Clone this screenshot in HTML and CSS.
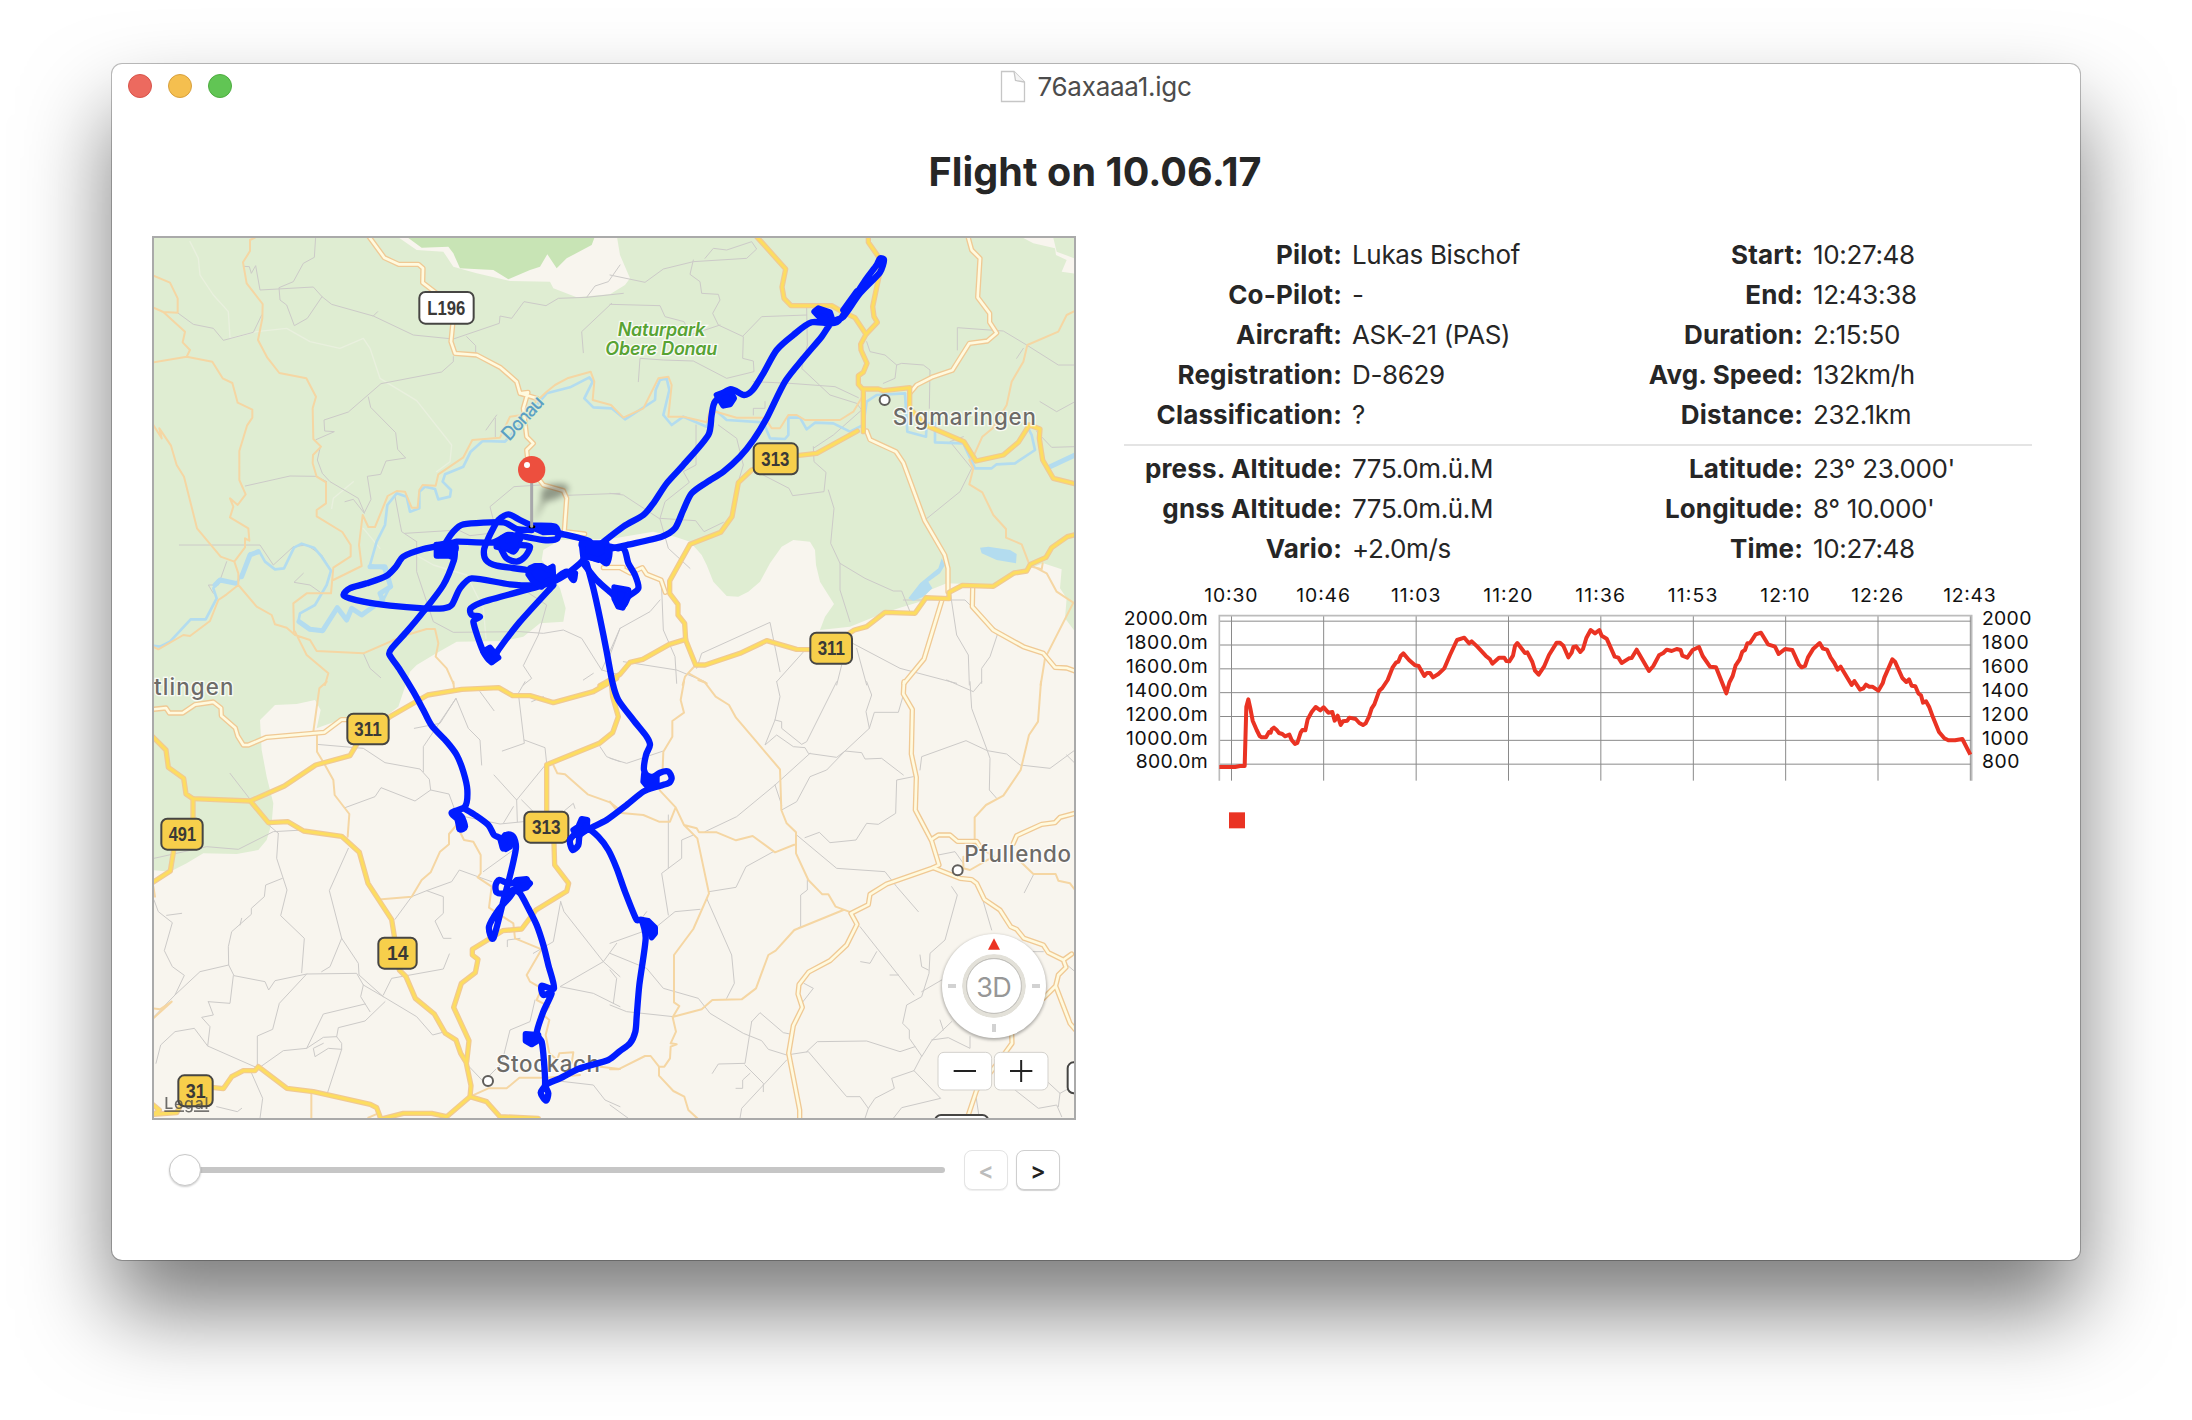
FILE: index.html
```html
<!DOCTYPE html>
<html lang="en">
<head>
<meta charset="utf-8">
<title>76axaaa1.igc</title>
<link rel="stylesheet" href="styles.css">
</head>
<body>
<main class="window">
  <header class="titlebar">
    <div class="lights"><span class="light close"></span><span class="light minimize"></span><span class="light zoom"></span></div>
    <div class="filename">
      <svg class="doc" width="26" height="34" viewBox="0 0 26 34"><path d="M1.5 1.5H14L24.500 12V31.500H1.500Z"/><path class="fold" d="M14 1.500L15.500 10.500L24.500 12"/></svg>
      <span>76axaaa1.igc</span>
    </div>
  </header>
  <h1 class="title">Flight on 10.06.17</h1>
  <div class="content">
    <section class="left">
      <div class="map">
        <svg width="920" height="880" viewBox="12 9 2760 2640">
          <defs>
            <g id="main-roads">
              <g transform="translate(1380 0)">
                <path d="M440 5L527 102L516 156L522 190L543 212H665L700 232L735 248L768 298"/>
                <path d="M775 5V22L806 66L810 110L788 215L792 245L802 262L768 298L752 328L753 345L771 385L760 412L745 422V448L760 465V590"/>
                <path d="M760 462H805L820 467L899 458V520L945 570L1062 620L1098 678L1180 660L1225 622L1258 570L1290 582L1288 610L1298 675L1330 730L1395 746"/>
                <path d="M742 588L620 655L560 662L425 705L385 743L366 845L332 892L240 928L179 1038V1075L204 1108V1140L224 1165L227 1215L257 1290H285L390 1255L470 1217L560 1243L640 1244L733 1185L770 1175L825 1132L915 1135L948 1088L1017 1091V1072L1057 1051L1150 1054L1212 1014L1250 1008L1261 988L1308 967L1325 938L1372 905L1395 899"/>
                <path d="M227 1213L178 1228L98 1273L60 1282L30 1318L-30 1352"/>
              </g>
              <g transform="translate(0 1335)">
                <path d="M10 172L48 210L55 262L101 295L108 342L129 356L301 363L403 318L497 255L600 227L622 190L720 110L833 45L935 28L1046 23L1088 47H1140L1210 68L1330 35L1400 -5"/>
                <path d="M129 356V415L72 505L61 573L10 606M301 363L355 428L414 425L461 453L575 469L628 517L654 610L725 719L734 775L748 870L768 890L796 955L853 1002L886 1060L918 1080L932 1120L948 1146L963 1217L960 1250L890 1310L845 1300H760L690 1318"/>
                <path d="M1384 10L1388 50L1405 110L1388 158L1348 190L1190 254V400L1212 490L1214 555L1256 610L1250 634L1158 690L1115 747L1058 752L967 808V825L984 838L976 878L934 910L911 982L957 1082L950 1146M960 1250L1010 1265L1050 1310L1165 1315"/>
                <path d="M10 1275L28 1290L12 1303L80 1298L105 1250M185 1222L220 1226L245 1190L280 1172H315L325 1160L411 1225L490 1235L661 1273L680 1283L692 1315"/>
              </g>
            </g>
            <g id="light-roads">
              <path d="M657 5L703 68L746 88H805L819 100L818 143L860 175L910 250L903 320L915 355L980 360L1052 398L1100 440L1110 475L1160 490M1110 475L1134 472L1120 520L1130 605L1150 625L1130 645L1135 690L1180 750L1240 767L1250 790L1243 890L1304 897M1370 997H1420"/>
              <g transform="translate(1380 0)">
                <path d="M-20 998H30L60 1014L97 998L110 1018L153 1035L166 1072"/>
                <path d="M1074 5L1085 45L1110 70L1103 187L1139 235V262L1160 294L1132 318L1078 325L1027 406L965 427L920 450L899 475M770 588L780 614L858 650L880 683L944 857L1004 960L1014 1000V1070M1088 1060L1087 1115L1150 1185L1240 1235L1300 1255L1335 1297L1370 1299L1395 1308M995 1098L942 1272L882 1345"/>
              </g>
              <g transform="translate(0 1335)"><path d="M10 88L48 84L58 99H98L135 74L190 66L213 84L214 107L256 144L263 168L280 195H295L350 172L523 157L574 119H600"/></g>
              <g transform="translate(1380 1335)">
                <path d="M882 5L880 42L907 88L904 222L919 292L916 390L965 483L987 555L970 563L830 612L780 643L775 674L723 700L741 733L710 795L660 842L596 876L567 914L564 942L577 982L550 1037L536 1120L569 1290V1330"/>
                <path d="M965 478L985 465H1020L1042 484H1100L1110 500M970 563L1050 595L1085 599L1100 610L1123 658L1170 690L1202 740L1220 748L1242 775L1300 795L1315 818L1360 840L1385 822M1360 840L1368 862L1345 885L1337 918L1300 955M1337 918L1380 1030L1395 1048M1205 1060L1206 1090L1170 1140L1100 1230L1070 1320M1210 490L1220 467L1295 433L1335 428L1350 412L1395 400"/>
              </g>
            </g>
          </defs>
          <rect class="land" x="0" y="0" width="2800" height="2700"/>
          <path class="green" d="M0 0H735L800 45L880 50L910 95L980 115L1080 138L1200 140L1210 160L1280 187L1380 178L1425 150L1440 130L1410 60L1400 0H2790V2530L2775 2525L2775 1190L2745 1150L2750 1090L2730 1060L2735 1003L2680 985L2640 1000L2530 1050L2390 1045L2340 1065L2310 1100L2250 1118L2200 1135L2100 1175L2010 1185L2025 1145L2052 1107L2010 1040L1998 990L1995 945L1980 920L1930 915L1895 935L1860 985L1830 1040L1795 1070L1765 1085L1730 1083L1690 1040L1670 990L1655 960L1620 920L1575 905L1510 890L1380 912L1230 915L1180 945L1175 975L1200 1010L1230 1060L1247 1120L1240 1160L1170 1165L1120 1205L1060 1218L920 1220L850 1260L800 1290L780 1310L765 1355L745 1415L700 1450L610 1440L500 1480L512 1425L495 1395L440 1407L375 1410L330 1455L335 1545L350 1625L370 1705L365 1765L350 1815L325 1845L260 1857L160 1855L110 1885L60 1910L0 1905Z"/>
          <path class="land" d="M2620 9L2650 25L2715 40L2718 60L2750 75L2735 110L2800 120V80L2720 50L2710 9ZM2800 1185L2775 1190V2650H2800Z"/>
          <path class="wood" d="M775 9L815 38L895 35L910 55L930 100L1030 105L1075 133L1140 105L1170 95L1192 58L1220 100L1250 70L1325 30L1333 9Z"/>

          <g class="lane">
            <path d="M120 20L145 70L150 120L190 180L235 230L240 310M240 310L320 290L410 280L480 320L570 340L640 310L660 340L690 430L800 497L905 630L900 680L860 710M640 880L690 940M545 820L550 790L610 740M780 950L850 990L950 1020L1000 1120L1008 1210"/>
          </g>
          <g class="minor">
            <path d="M497 5L493 67L460 85L430 140L387 158L390 195L410 210L433 272L472 250L516 185L490 156L330 165L317 92L304 115L298 95L280 94M516 185L545 208L670 243L790 300L910 312L1048 265L1050 243L1085 250L1122 200L1188 212L1225 190L1310 187L1420 175M1310 187L1335 153L1375 140L1410 90M1385 205L1295 290L1300 353M670 243L683 230M85 235L130 268L190 280L220 316L310 292L335 240M950 305L977 332V352M910 365V380L875 411L693 446L595 531L522 555L524 588L553 590L498 614M655 486L662 517L737 593L743 643L767 669L708 678L692 718L652 724L663 793L643 833L625 790L540 740L517 715L502 675L510 640M585 800L610 793L643 835M286 753L420 723L500 724L530 740M88 930H330L370 990L430 935L470 930L515 960L545 1010M735 785L750 865L755 890L800 920M765 895L925 885L960 902L1020 895M1410 775L1250 781M1170 750L1092 755L1020 815L1030 855M800 920V1010L850 1160L910 1192L1110 1190L1180 1195L1240 1185L1295 1210L1355 1305L1410 1320M1100 1050L1190 1110L1165 1200L1120 1292L1145 1330L1120 1350M1355 1305L1410 1180M230 980L205 1050L175 1050L190 1075M460 1015L432 1042L480 1050L515 1075M640 1255L660 1300L692 1328M1040 540L1008 585M1036 550V605"/>
            <g transform="translate(1380 0)">
              <path d="M0 120L105 142L160 102L250 80L410 70L440 42L425 20L350 45L310 40L285 70M250 75L240 118L270 140L275 175L325 178L330 195L308 235L325 270L400 305L398 370L430 378L432 410L350 430L250 378L160 375L90 370L85 440M0 208L150 212L165 245L222 260L240 300L330 270M400 302L455 245L590 240M590 220L592 330L575 400L660 480L740 505L755 525L670 600L610 640M430 440L540 445L675 455L745 488M465 500V520H430V540M325 570L380 610L400 690L385 740M258 570V690L220 710L238 742L165 800L150 850L257 857L282 890L340 862M0 775L40 780L150 852L175 940L240 1000M440 710L537 760L548 782L642 770L648 712L612 680L610 635M655 765L672 820L662 925L690 985V1065L720 1160M690 985L765 1030L850 1068L875 1068L900 1130M945 855L1050 770L1085 700L1020 620L1060 605M1042 345V278L1180 288L1250 330L1345 390H1395M770 320L780 350L825 360L860 390L875 385L940 390L960 405L958 520M860 390L855 430L820 445M1290 500L1340 530L1395 500M1280 590L1325 637L1395 635M1240 340L1220 370M880 1095L1065 1095L1120 1150L1165 1190L1140 1265L1115 1300V1345M1022 1080L1040 1200L1075 1260L1078 1350M150 1095L120 1130L30 1180L0 1260M155 1060L160 1185L195 1265L200 1345M260 1300L275 1255L480 1162L510 1310M740 1240L770 1350M695 1290L680 1350M500 1340L590 1240M728 1225L870 1300L1040 1345M40 1280L200 1305L285 1340"/>
            </g>
            <g transform="translate(0 1335)">
              <path d="M500 193L640 205L705 248L810 267L838 298L842 330L897 342L920 405L1050 432L1120 425M842 330L795 363L693 323L675 350L585 383M820 275V200L918 55L955 145L990 180L995 255M990 35L1032 92M918 55L870 130L793 145M1125 5L1105 40L1123 190L1057 213M1123 180L1185 203L1190 250L1100 360L1032 285M1100 360L1102 425M1145 65L1180 50M1090 380L1060 430M1115 360L1150 395M240 280L298 355L350 430L385 460M12 535L170 500L265 508L370 455L460 450M385 460L380 535L411 630L392 707L463 775L455 878M397 595L347 615L343 650L304 685V703L245 755L235 800L236 855L150 875L75 945M275 715L270 735M50 706L95 700M12 660L25 695L67 728L43 812L67 860L103 886L75 945L12 1010M236 855L252 887L345 905L356 930L375 902L470 882L620 880L640 915L700 950L800 1010L848 1065L885 1055M595 505L538 632L575 775L540 860L515 875M575 775L625 850L627 885L700 950M640 915L632 950L660 995M700 945L725 895L880 867L898 822M735 718L785 650L830 632L905 605L928 570L1025 605M830 632L880 650V700L855 723L880 775H903M1072 800V780L1110 775M470 882L388 970L368 1048L322 1068V1155M175 965L240 970L250 887M175 965L190 1005L155 1012L180 1040L173 1098L325 1165M18 1150L32 1095L75 1055L133 1045L173 1098M325 1165L400 1112L470 1105L520 1002L645 972M470 1105L520 1072L560 1070L575 1090V1108L532 1240M575 1108L535 1105L495 1130L490 1105L520 1090M560 1070L565 1043L645 1023L705 965M305 1180L338 1255L330 1315M200 1280L262 1295L275 1285M948 1150L1010 1215M1232 665L1242 695L1360 845L1410 890M1232 665L1210 785L1150 820M1360 845L1230 920L1330 940L1410 980M1360 845L1400 790M1155 960L1140 1025L1080 1050L1055 1150L1015 1190M1200 1200L1330 1215L1365 1260L1410 1280M1300 0L1330 -20M1240 395L1270 370L1275 385M1350 200L1370 230L1410 245M1000 575L1090 510"/>
            </g>
            <g transform="translate(1380 1335)">
              <path d="M0 235L50 250L160 213M500 5L510 50L495 120L465 195L500 165L550 200L585 203L595 220L680 232L705 213L755 218L765 237L815 235L880 285M495 120L515 125V145L575 193L590 185L680 5M770 5L785 45L768 95L778 145L705 213L650 270L600 290L560 365L515 390M778 145L793 97H865L880 45M600 220L495 315L380 410L285 455M495 315L515 375M910 290L860 300L857 400L805 433L770 430L738 480L660 488L628 457L585 473M560 465L680 565L825 575L860 620L925 695M930 270L935 230L1068 182L1132 212L1190 222L1230 255L1320 265L1395 210M1010 0L1090 35L1115 5M1080 5L1085 85L1132 212L1140 235L1138 330L1160 355M985 525L1035 515L1060 550M1025 620L1042 645L1005 780L960 820L957 880L935 950L890 975L878 1030L898 1050V1075L935 1128L912 1172L845 1195L853 1225L795 1255L775 1285L765 1315M1120 665L1145 750M750 740L912 945M930 825L935 860L955 870M935 935L995 900M800 815L780 850L752 845M840 885H865M290 655L365 825L373 910L350 955M297 635L378 622L408 560L490 515M555 750L572 740V645L592 630V600M270 688L195 695L140 740L0 790M175 705L155 580L175 565L215 535V480L250 465M175 565V405M110 695L95 715M0 820L110 865L160 925L265 955L300 1000L400 1060L455 1082L475 1108L530 1125L595 1115L710 1250H750L775 1285M590 1115L622 1085L770 1083L870 1115L915 1100M0 975L50 995L190 1010M0 870L20 895L10 970M425 1025L450 998L520 1058L540 1062M425 1025L405 1150L325 1152L307 1180M405 1155L460 1210V1235M420 1180L398 1200V1225H378M530 1140L395 1285L390 1315M582 910L610 925L575 970M912 1172L992 1255L875 1283L850 1315M935 1130L965 1082L1025 1025M965 1080L1015 1073L1080 1105V1070M990 1020L1000 1050M1215 1230L1285 1285L1340 1275L1355 1310M1285 1180L1350 1240L1345 1280M1350 1240L1395 1215M1270 585L1243 638M1245 815H1300M1360 845L1395 875M1370 225L1395 250M0 1275L55 1315M1095 1230L1108 1315"/>
            </g>
          </g>
          <g class="water">
            <path d="M10 1232L30 1235L60 1220L122 1153H167L200 1090L190 1060L205 1035L260 1045L290 990L300 955L330 953L345 980L375 1003L402 1000L432 938L455 926L492 938L515 965L543 1007L530 1050L495 1110L450 1135L445 1160L480 1185L520 1188L560 1120L590 1155L605 1120L635 1140L700 1095L720 1055L700 1000L660 990L680 920L705 870L712 810L740 775L770 785L780 830L808 820V770L825 755L855 762L865 793L900 785L903 765L878 740L885 718L940 695L962 650L998 618L1065 620L1190 475L1260 457L1318 427L1328 440L1303 490L1330 517L1385 520L1425 553L1515 495L1517 465L1530 435L1550 430L1558 465L1540 540L1565 570L1600 545L1670 575L1690 520L1730 555L1840 562L1860 610L1905 612L1915 600L1915 548L1950 548L1970 583L1995 563L2050 565L2100 590L2140 570L2150 500L2180 480L2265 475L2272 590L2328 605L2330 565H2355V622L2440 625L2475 700H2525L2540 688L2595 685L2655 645L2645 600L2635 580"/>
            <path class="wide" d="M195 1050L210 1035L258 1045M275 1025L300 960L325 950M447 1160L480 1183L518 1187L562 1118L590 1155L605 1120L635 1140L698 1095L690 1075L722 1055L705 995L660 995M2700 695L2775 660"/>
            <path class="lake" d="M2490 938L2515 935L2580 945L2600 957L2598 985L2540 975L2495 955ZM2275 1090L2310 1045L2365 1000L2375 970L2385 990L2370 1015L2335 1040L2347 1060L2320 1085L2290 1098Z"/>
          </g>
          <g class="secondary">
            <path d="M315 8L300 15V48L279 82L290 145L338 207L337 250L324 315L352 368L388 414L469 430L498 485L488 520L490 612L513 635L489 660L488 685L500 725L528 742V805L500 825V844L577 891L602 930V964L550 998L543 1075L470 1075L430 1105L432 1190M10 122L60 143L83 190V233L40 231L10 218M40 231L105 290L98 322L120 345L110 365L10 382M110 365L187 380L218 430L247 444L263 503L307 524V548L291 572L268 648V735L287 778L263 810L240 790L250 815L240 847L295 880L298 917L285 910V937L253 980L265 1015V1050L230 1078L205 1095L180 1158L120 1203L100 1200L25 1243L10 1235M10 570L35 610L28 580L63 632L80 690L102 725L141 880L212 965L253 980M265 1050L320 1115L365 1140L375 1168L410 1178L435 1200L480 1215L500 1248L640 1255L760 1203L830 1182H855L865 1225L857 1265L890 1300L910 1345M435 1190L470 1260L535 1315L525 1350M550 1035L635 993L627 930L638 840L655 876H675L713 783L740 768L765 770L785 818H803L808 765L818 750L857 752L865 718L940 667L967 615L1050 608L1080 545L1115 540L1190 470L1215 450L1252 430L1322 410L1333 440L1328 495L1383 510L1420 548L1480 520L1525 430L1555 425L1565 450L1555 545L1600 545L1670 562L1680 525L1760 548H1845L1865 580H1890L1915 540L1940 540L1965 555H2070L2110 530L2140 480"/>
            <g transform="translate(1380 0)">
              <path d="M1395 228L1370 240L1345 290L1252 330L1240 380L1205 440L1190 510L1148 580L1117 605L1090 665L1078 675L1090 700L1078 748L1117 772L1150 840L1188 882V908L1235 928L1258 988L1310 1015L1340 1070L1390 1103L1305 1270L1292 1350M1298 985L1295 1003L1258 993M257 1290L225 1325L218 1350M240 1317L290 1345"/>
            </g>
            <g transform="translate(0 1335)">
              <path d="M530 5L508 25L490 155L501 160V215L522 250L550 300L554 345L598 402L593 470M695 658L785 650L815 600L842 577L870 515L897 493V462L920 435L942 480L970 485L992 525V580L983 592L1025 620L1017 683L1090 730L1095 775L1175 808L1130 885L1140 905L1175 925L1160 960L1198 980L1180 1005L1198 1020L1187 1065L1198 1120L1222 1140L1228 1120L1270 1117L1265 1150M910 5L912 25M1210 255L1222 280L1245 283L1313 343L1380 367L1410 390M10 985L30 988L65 965L12 1013M960 1250L1015 1225H1070L1108 1193H1190L1290 1185M1350 1160L1410 1167M484 1240V1315M655 1313L690 1298M10 620L15 650"/>
            </g>
            <g transform="translate(1380 1335)">
              <path d="M222 5L212 60L222 98L187 123V170L160 215L158 265L140 300L150 332L197 382L180 425H147L100 405L25 398L0 365M197 382L222 435L262 475L297 640L250 747L192 825V967L208 978L188 1012L198 1055L182 1090L200 1093L182 1100L180 1135L163 1160H147L122 1128H105L25 1168H0M147 1160V1187L190 1233L223 1250L235 1290L262 1315M222 435L260 445L267 457H320L378 481L428 468L495 517L558 492M265 0L285 8L317 50L357 75L378 113L510 268L514 390L530 430L558 457V520L595 600L637 643H655L677 680L723 697M700 690L553 750L497 812L475 825L438 925L395 958L307 960L275 988L190 1010M1293 5L1284 125L1257 165L1232 270L1180 347L1128 375L1094 412V490L1110 500L1150 530L1080 570L1060 565V530M1232 545L1270 582H1337L1345 602L1380 610L1395 630"/>
            </g>
          </g>
          <use class="road-case" href="#light-roads"/><use class="light-fill" href="#light-roads"/>
          <use class="road-case" href="#main-roads"/><use class="main-fill" href="#main-roads"/>

          <g class="label">
            <g class="park"><text x="1403" y="303" textLength="263">Naturpark</text><text x="1366" y="360" textLength="336">Obere Donau</text></g>
            <text class="river" transform="translate(1078 620) rotate(-47)" x="0" y="0" textLength="158">Donau</text>
            <text x="2228" y="571" textLength="430">Sigmaringen</text>
            <text x="12" y="1380" textLength="238">tlingen</text>
            <text x="2443" y="1880" textLength="320">Pfullendo</text>
            <text x="1038" y="2512" textLength="312">Stockach</text>
          </g>
          <g class="town"><circle cx="2204" cy="495" r="15"/><circle cx="2423" cy="1906" r="15"/><circle cx="1014" cy="2538" r="15"/></g>
          <g class="shield">
            <rect class="local" x="808" y="171" width="163" height="95" rx="18"/><text x="832" y="239" textLength="114" lengthAdjust="spacingAndGlyphs">L196</text>
            <rect x="1811" y="625" width="132" height="93" rx="18"/><text x="1834" y="692" textLength="84" lengthAdjust="spacingAndGlyphs">313</text>
            <rect x="1981" y="1193" width="125" height="93" rx="18"/><text x="2003" y="1260" textLength="82" lengthAdjust="spacingAndGlyphs">311</text>
            <rect x="592" y="1436" width="124" height="92" rx="18"/><text x="613" y="1503" textLength="82" lengthAdjust="spacingAndGlyphs">311</text>
            <rect x="34" y="1751" width="124" height="93" rx="18"/><text x="56" y="1818" textLength="82" lengthAdjust="spacingAndGlyphs">491</text>
            <rect x="1123" y="1730" width="132" height="93" rx="18"/><text x="1146" y="1797" textLength="86" lengthAdjust="spacingAndGlyphs">313</text>
            <rect x="685" y="2108" width="115" height="93" rx="18"/><text x="711" y="2175" textLength="64" lengthAdjust="spacingAndGlyphs">14</text>
            <rect x="85" y="2521" width="103" height="93" rx="18"/><text x="107" y="2588" textLength="60" lengthAdjust="spacingAndGlyphs">31</text>
            <rect class="local" x="2753" y="2482" width="140" height="93" rx="18"/>
            <rect class="local" x="2355" y="2640" width="160" height="93" rx="18"/>
          </g>
          <text class="legal" x="43" y="2623">Legal</text>

          <g class="track">
            <path class="smooth" d="M1145 872L1110 855L1075 838L1045 855L1030 880L1015 910L1002 945L1008 975L1040 992L1130 1005L1170 1020L1200 1000"/>
            <path class="smooth" d="M1145 872L1215 875L1222 910L1180 915L1100 900M1145 885L1100 882L1060 862L940 868L910 890L885 930L920 920L1030 922L1075 900L1110 912L1080 940L1040 935M885 930L820 942L760 965L738 995L710 1022L650 1045L600 1060L582 1082L640 1100L720 1112L820 1120L880 1120L905 1110L930 1060L965 1030L1080 1048L1175 1050L1230 1030L1290 985L1310 960L1320 920L1230 895L1145 872"/>
            <path class="smooth" d="M1050 925L1075 910L1105 920L1090 950L1060 930M1055 945L1070 970L1100 980L1125 965L1140 935L1110 930M860 930L910 925L915 945L865 960L880 940L905 965L870 930"/>
            <path class="smooth" d="M915 945L912 975L880 1050L820 1130L770 1190L725 1240L718 1258L750 1305L790 1370L820 1425L845 1472L890 1520L920 1560L940 1610L952 1665L945 1715L905 1733L922 1752L930 1783L945 1775L935 1745L920 1735M945 1722L975 1740L1015 1770L1032 1800L1050 1810L1060 1840L1070 1800L1090 1805L1098 1835L1090 1880L1078 1930L1062 1990L1030 2110L1017 2075L1045 2025L1080 1985L1110 1945L1140 1945L1110 1960L1095 1940"/>
            <path class="smooth" d="M1130 1942L1075 1945L1048 1935L1037 1950L1040 1972L1065 1975L1090 1965L1110 1975L1135 2020L1160 2070L1180 2130L1195 2190L1212 2260L1175 2252L1180 2280L1205 2275L1180 2330L1160 2395L1175 2420L1182 2480L1185 2550L1172 2573L1188 2597L1195 2575L1188 2550L1230 2530L1290 2500L1375 2475L1410 2448L1440 2425L1456 2390L1460 2345L1468 2250L1487 2110L1475 2055L1460 2055L1425 1970L1400 1900L1375 1845L1345 1805L1310 1780L1285 1790L1260 1815L1268 1845L1285 1830L1290 1800L1320 1780L1370 1755L1430 1710L1480 1670L1520 1655L1555 1645L1565 1630L1555 1610L1530 1613L1500 1630L1482 1605L1488 1560L1500 1530L1490 1505L1450 1455L1405 1395L1388 1345L1370 1250L1350 1150L1330 1060L1310 985"/>
            <path class="smooth" d="M1175 1052L1000 1100L962 1120L965 1140L990 1145L970 1160L1000 1250L1025 1280L1045 1245L1110 1160L1210 1050"/>
            <path class="smooth" d="M1300 985L1340 1035L1390 1080L1420 1110L1435 1085L1465 1060L1455 1020L1435 985L1420 940L1370 940L1300 925M1355 925L1420 875L1480 840L1510 805L1550 745L1600 690L1675 600L1685 540L1695 500L1740 463L1782 480L1808 465L1840 415L1880 345L1930 300L1985 262L2060 262L2110 190L2150 130L2180 90L2190 70L2202 75L2190 112L2130 175L2080 245L2045 262L2015 305L1960 370L1905 440L1850 550L1810 615L1770 665L1720 710L1670 742L1625 775L1600 825L1575 880L1535 905L1430 930L1340 950"/>
            <path class="smooth knot" d="M1295 930L1360 935L1350 970L1310 960L1375 940L1370 985L1340 960M1225 1025L1250 1010L1270 1035L1275 1015M1380 935L1405 940M2120 170L2080 225"/>
            <path class="blob" d="M860 930H915L912 962H860ZM1140 1000L1155 993H1175L1195 1005L1208 995L1210 1030L1190 1040L1175 1055L1150 1040L1135 1018ZM1055 910L1075 900L1100 910L1095 930L1060 935ZM1000 1250L1020 1238L1045 1268L1025 1282ZM1295 925H1370L1375 960L1345 975L1315 965L1300 970ZM1393 1057L1410 1060L1435 1065L1430 1090L1418 1118L1405 1115L1393 1090ZM1993 230L2005 220L2040 232L2050 262L2010 248ZM1700 480L1740 465L1752 490L1740 508L1720 512ZM1482 1618L1500 1625H1520L1520 1648L1495 1658L1480 1640ZM1053 1815L1065 1800L1082 1808L1080 1835L1068 1842ZM1100 1935L1130 1932L1138 1947L1130 1957L1108 1965ZM1127 2397L1165 2400L1162 2418L1145 2428L1127 2418ZM1295 1752L1312 1755L1310 1785L1278 1800L1270 1785L1285 1775ZM1478 2055L1495 2058L1515 2078L1515 2095L1505 2107L1497 2085ZM1150 878H1210L1215 890L1180 892ZM928 1755L938 1762L940 1778L928 1782Z"/>
          </g>
          <g class="pin">
            <path class="pin-shadow" d="M1150 865L1175 795Q1165 755 1210 748Q1260 740 1255 765Q1240 790 1185 800Z"/>
            <ellipse cx="1146" cy="875" rx="10" ry="5"/>
            <path class="stem" d="M1145 740V874"/>
            <circle class="head" cx="1145" cy="704" r="41"/><circle class="shine" cx="1131" cy="690" r="9"/>
          </g>
          <g class="compass" transform="translate(2532 2253)">
            <circle class="ring-shadow" cy="4" r="158"/>
            <path class="dial" fill-rule="evenodd" d="M-156 0A156 156 0 1 0 156 0A156 156 0 1 0-156 0ZM-94 0A94 94 0 1 1 94 0A94 94 0 1 1-94 0Z"/>
            <circle class="groove" r="89"/><circle class="button" r="82"/>
            <path class="north" d="M0-143L18-109H-18Z"/>
            <path class="tick" d="M-138 0H-114M114 0H138M0 114V138"/>
            <text x="-53" y="33" textLength="106">3D</text>
          </g>
          <g class="zoom-controls">
            <rect x="2364" y="2452" width="161" height="113" rx="18"/><rect x="2533" y="2452" width="161" height="113" rx="18"/>
            <path d="M2411 2508H2478M2580 2508H2647M2613.500 2475V2541"/>
          </g>
        </svg>
      </div>
      <div class="controls">
        <div class="slider"><span class="knob"></span></div>
        <button class="step" disabled>&lt;</button><button class="step">&gt;</button>
      </div>
    </section>
    <section class="right">
      <dl class="info">
        <dt>Pilot:</dt><dd>Lukas Bischof</dd><dt>Start:</dt><dd>10:27:48</dd>
        <dt>Co-Pilot:</dt><dd>-</dd><dt>End:</dt><dd>12:43:38</dd>
        <dt>Aircraft:</dt><dd>ASK-21 (PAS)</dd><dt>Duration:</dt><dd>2:15:50</dd>
        <dt>Registration:</dt><dd>D-8629</dd><dt>Avg. Speed:</dt><dd>132km/h</dd>
        <dt>Classification:</dt><dd>?</dd><dt>Distance:</dt><dd>232.1km</dd>
      </dl>
      <dl class="info live">
        <dt>press. Altitude:</dt><dd>775.0m.ü.M</dd><dt>Latitude:</dt><dd>23° 23.000'</dd>
        <dt>gnss Altitude:</dt><dd>775.0m.ü.M</dd><dt>Longitude:</dt><dd>8° 10.000'</dd>
        <dt>Vario:</dt><dd>+2.0m/s</dd><dt>Time:</dt><dd>10:27:48</dd>
      </dl>
      <svg class="chart" width="910" height="260" viewBox="27 0 2730 780">
        <path class="grid" d="M313 153.500H2571M313 225H2571M313 296.500H2571M313 368H2571M313 439.500H2571M313 511H2571M313 582.500H2571M349.500 137V632M626 137V632M903.500 137V632M1180.500 137V632M1457.500 137V632M1735 137V632M2012 137V632M2289 137V632M2566 137V632"/>
        <path class="frame" d="M313 632V137H2570V632"/>
        <g class="axis">
          <text x="268" y="96" textLength="159">10:30</text><text x="544" y="96" textLength="161">10:46</text><text x="828" y="96" textLength="148">11:03</text><text x="1105" y="96" textLength="147">11:20</text><text x="1381" y="96" textLength="149">11:36</text><text x="1658" y="96" textLength="149">11:53</text><text x="1936" y="96" textLength="147">12:10</text><text x="2209" y="96" textLength="156">12:26</text><text x="2485" y="96" textLength="157">12:43</text>
          <text x="26" y="165" textLength="252">2000.0m</text><text x="33" y="237" textLength="245">1800.0m</text><text x="33" y="309" textLength="245">1600.0m</text><text x="33" y="381" textLength="245">1400.0m</text><text x="33" y="453" textLength="245">1200.0m</text><text x="33" y="524" textLength="245">1000.0m</text><text x="62" y="594" textLength="216">800.0m</text>
          <text x="2601" y="165" textLength="148">2000</text><text x="2601" y="237" textLength="140">1800</text><text x="2601" y="309" textLength="140">1600</text><text x="2601" y="381" textLength="140">1400</text><text x="2601" y="453" textLength="140">1200</text><text x="2601" y="524" textLength="140">1000</text><text x="2601" y="594" textLength="112">800</text>
        </g>
        <path class="curve" d="M313 591H360L375 588H389L394 410L400 388L406 415L413 452L425 480L434 498L440 502H453L462 486L467 488L470 478L477 473L485 480L492 489L502 492L510 499L523 494L530 510L540 522L547 519L557 488L562 480L571 481L578 448L590 426L602 411L616 421L626 412L640 428L652 426L659 452L668 437L677 465L684 454L697 452L703 443L722 447L733 459L744 465L752 460L762 440L770 415L778 403L793 362L802 354L818 330L833 292L843 278L850 275L857 258L865 250L882 270L900 286L911 288L928 318L936 309H945L954 322L970 312L988 295L1005 255L1026 210L1048 203L1062 220L1070 214L1087 230L1112 257L1125 268L1132 281L1152 263H1168L1174 273L1183 274L1194 257L1200 228L1207 219L1230 249L1237 247L1252 276L1260 302L1271 314L1287 290L1302 255L1325 218H1335L1345 227L1360 262L1370 248L1375 231L1383 229L1396 246L1404 237L1414 204L1427 180L1440 190L1453 180L1460 197L1475 206L1499 260L1510 263L1520 279L1542 265L1550 264L1565 239L1602 303L1615 288L1632 256L1645 249L1655 239L1670 243L1685 237L1697 240L1702 257L1717 263L1733 240L1752 231L1763 258L1785 290L1803 292L1834 370L1843 338L1853 318L1862 286L1874 268L1882 245L1890 240L1897 220L1905 219L1922 193L1938 188L1959 223L1980 230L1991 252L2010 237L2032 240L2052 284L2060 292L2070 288L2079 262L2095 236L2114 219L2124 236L2136 239L2147 263L2158 279L2168 299L2177 290L2210 345L2218 333L2235 359L2245 355L2253 344L2263 350L2272 350L2290 362L2303 340L2308 323L2332 268L2340 275L2362 324L2374 336L2382 328L2390 347L2401 349L2410 370L2418 376L2424 398L2433 394L2443 412L2454 442L2472 486L2488 505L2500 511H2520L2542 507L2566 554"/>
        <rect class="key" x="342" y="727" width="48" height="48"/>
      </svg>
    </section>
  </div>
</main>
<script src="track.js"></script>
</body>
</html>
```
FILE: track.js
```js
// Turns the recorded fixes (absolute M/L points) into a smooth flight line.
const TENSION = 0.14;

function smooth(points) {
  let d = `M${points[0].join(' ')}`;
  for (let i = 0; i < points.length - 1; i++) {
    const a = points[i - 1] || points[i];
    const b = points[i];
    const c = points[i + 1];
    const e = points[i + 2] || c;
    const len = Math.hypot(c[0] - b[0], c[1] - b[1]);
    const handle = (p, q, sign, at) => {
      const span = Math.hypot(q[0] - p[0], q[1] - p[1]) || 1;
      const k = Math.min(TENSION * span, len * 0.3) / span * sign;
      return [at[0] + (q[0] - p[0]) * k, at[1] + (q[1] - p[1]) * k];
    };
    d += `C${handle(a, c, 1, b).join(' ')} ${handle(b, e, -1, c).join(' ')} ${c.join(' ')}`;
  }
  return d;
}

document.querySelectorAll('.smooth').forEach((path) => {
  const runs = path.getAttribute('d').split('M').filter(Boolean);
  path.setAttribute('d', runs.map((run) => smooth(run.split('L').map((p) => p.trim().split(' ').map(Number)))).join(''));
});
```
FILE: styles.css
```css
* { box-sizing: border-box; }
body {
  margin: 0;
  padding: 64px 112px 0;
  height: 1420px;
  overflow: hidden;
  background: #fff;
  color: #262626;
  font-family: Inter, "Liberation Sans", sans-serif;
}
.window {
  width: 1968px;
  height: 1196px;
  border-radius: 10px;
  background: #fff;
  box-shadow: 0 0 0 1px rgba(0, 0, 0, .25), 0 50px 88px rgba(0, 0, 0, .52);
}
.titlebar {
  display: grid;
  grid-template-columns: 1fr auto 1fr;
  align-items: center;
  height: 44px;
  padding: 0 16px;
}
.lights { display: flex; gap: 16px; }
.light { width: 24px; height: 24px; border-radius: 50%; border: 1px solid; }
.close { background: #ec6a5f; border-color: #d8534a; }
.minimize { background: #f5bf4f; border-color: #d8a03d; }
.zoom { background: #61c554; border-color: #4dac3f; }
.filename { display: flex; align-items: center; gap: 11px; padding-top: 1px; font-size: 26px; letter-spacing: -.25px; color: #4c4c4c; }
.doc { fill: #fff; stroke: #c6c6c6; stroke-width: 1.3; }
.doc .fold { fill: #f4f4f4; }
.title { margin: 38px 0 0; padding-right: 2px; text-align: center; font-size: 39.5px; line-height: 52px; font-weight: 700; letter-spacing: .1px; }
.content { display: flex; gap: 48px; padding: 38px 46px 0 40px; }
.left { width: 924px; }
.map { height: 884px; border: 2px solid #aaa; overflow: hidden; }
.map svg, .chart { display: block; }
.map path { stroke-linejoin: round; stroke-linecap: round; }
.land { fill: #f8f5ee; }
.green { fill: #dfedd2; }
.wood { fill: #c8e4b5; }
.lane { fill: none; stroke: #e9f0de; stroke-width: 4; }
.minor { fill: none; stroke: #cccac8; stroke-width: 3; }
.water { fill: none; stroke: #b3dcef; stroke-width: 8; }
.wide { stroke-width: 15; }
.lake { fill: #b3dcef; stroke: none; }
.secondary { fill: none; stroke: #f5d6a3; stroke-width: 6; }
.road-case { fill: none; stroke: #f0c994; stroke-width: 16; }
.light-fill { fill: none; stroke: #fffadf; stroke-width: 8; }
.main-fill { fill: none; stroke: #fddd60; stroke-width: 9; }
.label text { font-size: 67px; font-weight: 500; fill: #6d6b68; stroke: #fff; stroke-opacity: .8; stroke-width: 8; paint-order: stroke; }
.label .park text { font-size: 54px; font-style: italic; font-weight: 600; fill: #58a334; }
.label .river { font-size: 56px; fill: #5ba0c4; stroke: #dfedd2; }
.town { fill: #fff; stroke: #5f5d5a; stroke-width: 6; }
.shield rect { fill: #f7cf4b; stroke: #464543; stroke-width: 6; }
.shield .local { fill: #fff; }
.shield text { font: bold 58px "Liberation Sans", sans-serif; fill: #3a3937; }
.legal {
  font-size: 48px;
  font-weight: 500;
  letter-spacing: 2px;
  fill: #4b4a48;
  opacity: .8;
  text-decoration: underline;
  text-decoration-skip-ink: none;
}
.track { fill: none; stroke: #001cff; stroke-width: 19; }
.track .blob { fill: #001cff; stroke-width: 18; }
.pin-shadow { fill: #000; opacity: .35; filter: blur(9px); }
.stem { fill: none; stroke: #a7a7ab; stroke-width: 9; }
.head { fill: #ed4f3e; }
.shine { fill: #fff; }
.ring-shadow { fill: rgba(0, 0, 0, .3); filter: blur(4px); }
.dial { fill: #fff; }
.groove { fill: none; stroke: #e3e1d9; stroke-width: 12; }
.button { fill: #fff; stroke: #bdbbb6; stroke-width: 2; }
.north { fill: #eb3323; }
.tick { stroke: #d2d2d2; stroke-width: 12; }
.map .tick { stroke-linecap: butt; }
.compass text { font-size: 81px; fill: #979797; }
.zoom-controls rect { fill: #fff; stroke: #d3d1cc; stroke-width: 3; }
.zoom-controls path { fill: none; stroke: #222; stroke-width: 6; }
.map .zoom-controls path { stroke-linecap: butt; }
.controls { display: flex; align-items: center; gap: 8px; padding: 30px 16px 0 17px; }
.slider { display: flex; align-items: center; flex: 1; height: 6px; margin-right: 11px; border-radius: 3px; background: #c6c6c6; }
.knob { width: 32px; height: 32px; border: 1px solid #c9c9c9; border-radius: 50%; background: #fff; box-shadow: 0 1px 2px rgba(0, 0, 0, .2); }
.step {
  width: 44px;
  height: 40px;
  padding: 1px 0 0;
  border: 1px solid #cfcfcf;
  border-radius: 8px;
  background: #fff;
  box-shadow: 0 1px 1px rgba(0, 0, 0, .18);
  color: #222;
  font: 600 23px Inter, sans-serif;
}
.step:disabled { color: #bcbcbc; border-color: #e4e4e4; box-shadow: 0 1px 1px rgba(0, 0, 0, .07); }
.right { width: 910px; }
.info {
  display: grid;
  grid-template-columns: 218px 223px 218px 1fr;
  column-gap: 10px;
  grid-auto-rows: 40px;
  margin: 0;
  width: 908px;
  height: 210px;
  border-bottom: 2px solid #e4e4e4;
  font-size: 26px;
  line-height: 38px;
  white-space: nowrap;
}
.info dt { text-align: right; font-weight: 700; letter-spacing: .15px; }
.info dd { margin: 0; letter-spacing: -.35px; }
.live { height: 122px; padding-top: 4px; border: 0; }
.chart { margin-top: 2px; }
.grid { fill: none; stroke: #8a8a8a; stroke-width: 3; }
.frame { fill: none; stroke: #bcbcbc; stroke-width: 5; }
.axis text { font-size: 58px; fill: #111; }
.curve { fill: none; stroke: #ea3323; stroke-width: 12; stroke-linejoin: round; }
.key { fill: #ea3323; }
```
